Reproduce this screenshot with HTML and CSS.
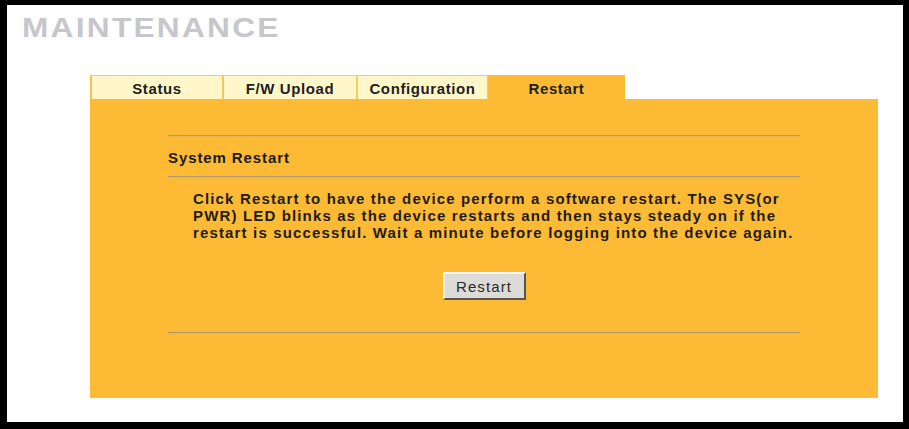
FILE: index.html
```html
<!DOCTYPE html>
<html>
<head>
<meta charset="utf-8">
<title>Maintenance</title>
<link rel="stylesheet" href="styles.css">
</head>
<body>
<div class="frame">
  <h1 class="title">MAINTENANCE</h1>
  <div class="panel">
    <div class="tabs">
      <div class="tab tab-status">Status</div>
      <div class="tab tab-fw">F/W Upload</div>
      <div class="tab tab-config">Configuration</div>
      <div class="tab tab-active">Restart</div>
      <div class="tab-rest"></div>
    </div>
    <div class="body">
      <div class="rule rule-top"></div>
      <div class="section-title">System Restart</div>
      <div class="rule"></div>
      <p class="desc">Click Restart to have the device perform a software restart. The SYS(or<br>PWR) LED blinks as the device restarts and then stays steady on if the<br>restart is successful. Wait a minute before logging into the device again.</p>
      <div class="actions"><button class="btn" type="button">Restart</button></div>
      <div class="rule rule-bottom"></div>
    </div>
  </div>
</div>
</body>
</html>
```
FILE: styles.css
```css
html, body {
  margin: 0;
  padding: 0;
  background: #fff;
}
.frame {
  box-sizing: border-box;
  width: 909px;
  height: 429px;
  border-style: solid;
  border-color: #000;
  border-width: 5px 6px 7px 7px;
  background: #fff;
  font-family: "Liberation Sans", Arial, sans-serif;
  padding: 8px 0 0 15px;
  overflow: hidden;
}
.title {
  margin: 0;
  width: max-content;
  font-size: 28px;
  line-height: 30px;
  font-weight: bold;
  color: #c6c6cb;
  letter-spacing: 2px;
  transform: scaleX(1.13);
  transform-origin: left center;
}
.panel {
  margin: 32px 0 0 68px;
  width: 788px;
}
.tabs {
  display: flex;
  height: 24px;
  background: #fff;
}
.tab {
  box-sizing: border-box;
  height: 24px;
  display: flex;
  align-items: center;
  justify-content: center;
  font-size: 15px;
  font-weight: bold;
  letter-spacing: 0.6px;
  color: #1e1e1e;
  background: #fff7c9;
  border: 1px solid #f6cb62;
  border-bottom: none;
  padding-top: 1px;
}
.tab-status { width: 133px; border-left: 2px solid #f8c048; }
.tab-fw { width: 134px; border-left: 1px solid #f3c35c; }
.tab-config { width: 131px; }
.tab-active {
  width: 137px;
  background: #fdba35;
  border-color: #fdba35;
}
.tab-rest {
  flex: 1;
  background: #fff;
}
.body {
  background: #fdba35;
  height: 299px;
  padding: 0 78px;
  box-sizing: border-box;
  overflow: hidden;
}
.rule {
  height: 1px;
  background: #b09a6c;
  border-bottom: 1px solid #e6b750;
}
.rule-top { margin-top: 36px; }
.section-title {
  margin: 12px 0 9px;
  font-size: 15px;
  line-height: 18px;
  font-weight: bold;
  letter-spacing: 0.9px;
  color: #1c1a14;
}
.desc {
  margin: 12px 0 0 25px;
  font-size: 15px;
  line-height: 17px;
  font-weight: bold;
  letter-spacing: 1.15px;
  color: #1f1c14;
  white-space: nowrap;
}
.actions {
  display: flex;
  justify-content: center;
  margin-top: 31px;
}
.btn {
  box-sizing: border-box;
  width: 83px;
  height: 28px;
  padding: 0;
  font-family: "Liberation Sans", Arial, sans-serif;
  font-size: 15px;
  letter-spacing: 1.1px;
  color: #2a2a2a;
  background: #dcdbd8;
  border: 2px solid;
  border-color: #f4f4f2 #5a5550 #5a5550 #f4f4f2;
}
.rule-bottom { margin-top: 32px; }
```
